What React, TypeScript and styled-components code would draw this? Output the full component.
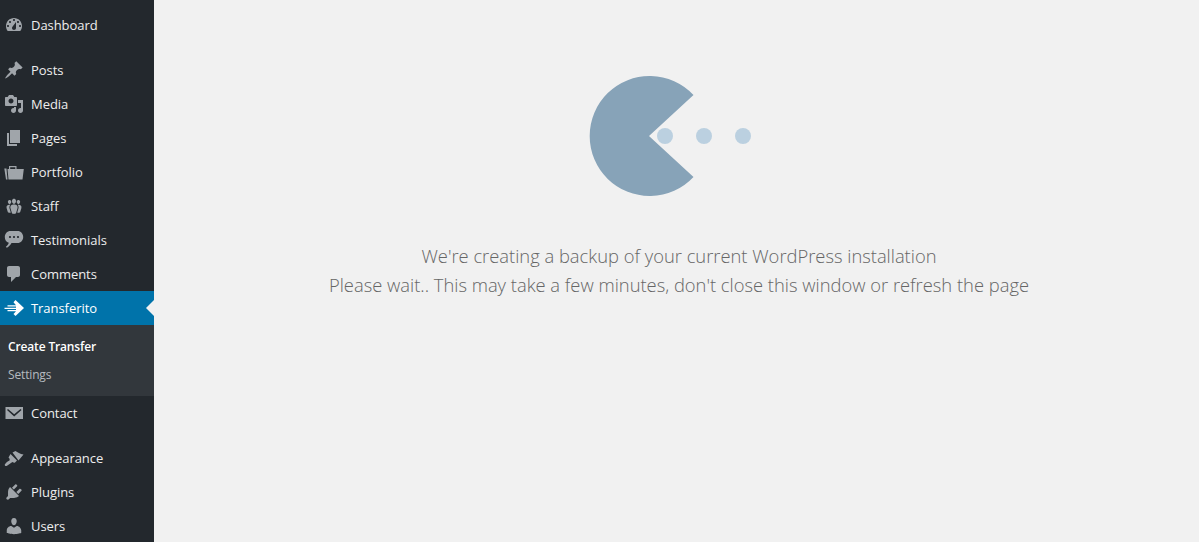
import React from "react"
import styled, { createGlobalStyle } from "styled-components"

const GlobalStyle = createGlobalStyle`
  html, body {
    margin: 0;
    height: 100%;
    background: #f1f1f1;
  }
  #root {
    height: 100%;
  }
`

const Page = styled.div`
  display: flex;
  width: 1199px;
  height: 542px;
  overflow: hidden;
`

const Sidebar = styled.nav`
  width: 154px;
  flex-shrink: 0;
  padding-top: 8px;
  background: #23282d;
  font-family: "Open Sans", "Liberation Sans", sans-serif;
`

const MenuItem = styled.div<{ $active?: boolean; $gap?: boolean }>`
  position: relative;
  display: flex;
  align-items: center;
  height: 34px;
  margin-bottom: ${({ $gap }) => ($gap ? "11px" : "0")};
  background: ${({ $active }) => ($active ? "#0073aa" : "transparent")};
  color: ${({ $active }) => ($active ? "#fff" : "#eee")};
  font-size: 13px;
  letter-spacing: -0.05px;

  ${({ $active }) =>
    $active &&
    `
    &::after {
      content: "";
      position: absolute;
      right: 0;
      top: 9px;
      border: 8px solid transparent;
      border-right-color: #f1f1f1;
    }
  `}
`

const IconSlot = styled.span`
  display: flex;
  justify-content: center;
  width: 31px;
  padding-right: 3px;
  box-sizing: border-box;
  color: #a0a5aa;
`

const ActiveIconSlot = styled(IconSlot)`
  color: #fff;
`

const SubMenu = styled.div`
  height: 71px;
  padding-top: 8px;
  box-sizing: border-box;
  background: #32373c;
`

const SubItem = styled.div<{ $current?: boolean }>`
  height: 28px;
  padding-left: 8px;
  line-height: 28px;
  color: ${({ $current }) => ($current ? "#fff" : "rgba(240, 245, 250, 0.7)")};
  font-size: 12px;
  font-weight: ${({ $current }) => ($current ? 600 : 400)};
  letter-spacing: -0.15px;
`

const Main = styled.main`
  flex: 1;
  display: flex;
  flex-direction: column;
  align-items: center;
  padding: 76px 0 0 5px;
  background: #f1f1f1;
`

const Loader = styled.svg`
  display: block;
  margin-right: 11px;
`

const Message = styled.p`
  margin: 45px 0 0;
  color: #666;
  font-family: "Open Sans", "Liberation Sans", sans-serif;
  font-size: 18.35px;
  font-weight: 300;
  line-height: 29px;
  text-align: center;
  white-space: nowrap;
`

const Icon: React.FC<{ d: string; size?: number }> = ({ d, size = 20 }) => (
  <svg width={size} height={size} viewBox="0 0 20 20" fill="currentColor">
    <path fillRule="evenodd" d={d} />
  </svg>
)

const paths = {
  dashboard:
    "M3.76 16h12.48c1.1-1.37 1.76-3.11 1.76-5 0-4.42-3.58-8-8-8s-8 3.58-8 8c0 1.89.66 3.63 1.76 5zM10 4c.55 0 1 .45 1 1s-.45 1-1 1-1-.45-1-1 .45-1 1-1zM6 6c.55 0 1 .45 1 1s-.45 1-1 1-1-.45-1-1 .45-1 1-1zm8 0c.55 0 1 .45 1 1s-.45 1-1 1-1-.45-1-1 .45-1 1-1zm-5.37 5.55L12 7v6c0 1.1-.9 2-2 2s-2-.9-2-2c0-.57.24-1.08.63-1.45zM4 10c.55 0 1 .45 1 1s-.45 1-1 1-1-.45-1-1 .45-1 1-1zm12 0c.55 0 1 .45 1 1s-.45 1-1 1-1-.45-1-1 .45-1 1-1z",
  posts:
    "M10.44 3.02l1.82-1.82 6.36 6.35-1.83 1.82c-1.05-.68-2.48-.57-3.41.36l-.75.75c-.92.93-1.04 2.35-.35 3.41l-1.83 1.82-2.41-2.41-2.8 2.79c-.42.42-3.38 2.71-3.8 2.29s1.86-3.39 2.28-3.81l2.79-2.79L4.1 9.36l1.83-1.82c1.05.69 2.48.57 3.4-.36l.75-.75c.93-.92 1.05-2.35.36-3.41z",
  media:
    "M13 11V4c0-.55-.45-1-1-1h-1.67L9 1H5L3.67 3H2c-.55 0-1 .45-1 1v7c0 .55.45 1 1 1h10c.55 0 1-.45 1-1zM7 4.5c1.38 0 2.5 1.12 2.5 2.5S8.38 9.5 7 9.5 4.5 8.38 4.5 7 5.62 4.5 7 4.5zM14 6h5v10.5c0 1.38-1.12 2.5-2.5 2.5S14 17.88 14 16.5s1.12-2.5 2.5-2.5c.17 0 .34.02.5.05V9h-3V6zm-4 8.05V13h2v3.5c0 1.38-1.12 2.5-2.5 2.5S7 17.88 7 16.5 8.12 14 9.5 14c.17 0 .34.02.5.05z",
  pages: "M6 15V2h10v13H6zm-1 1h8v2H3V5h2v11z",
  portfolio:
    "M3.500 7H5V4h7.500V7H19.800L18.500 17.500H4.500zM6.200 5.200h5.100V7H6.200zM.300 6.500H2.500L3.500 17.500H2z",
  staff:
    "M8.03 4.46c-.29 1.28.55 3.46 1.97 3.46 1.41 0 2.25-2.18 1.96-3.46-.22-.98-1.08-1.63-1.96-1.63-.89 0-1.74.65-1.97 1.63zm-4.13.9c-.25 1.08.47 2.93 1.67 2.93s1.92-1.85 1.67-2.93c-.19-.83-.92-1.39-1.67-1.39s-1.48.56-1.67 1.39zm8.86 0c-.25 1.08.47 2.93 1.66 2.93 1.2 0 1.92-1.85 1.67-2.93-.19-.83-.92-1.39-1.67-1.39-.74 0-1.47.56-1.66 1.39zm-.59 11.43l1.25-4.3C14.2 10 12.71 8.47 10 8.47c-2.72 0-4.21 1.53-3.44 4.02l1.26 4.3C8.05 17.51 9 18 10 18c.98 0 1.94-.49 2.17-1.21zm-6.1-7.63c-.49.67-.96 1.83-.42 3.59l1.12 3.79c-.34.2-.77.31-1.2.31-.85 0-1.65-.41-1.85-1.03l-1.07-3.65c-.65-2.11.61-3.4 2.92-3.4.27 0 .54.02.79.06-.1.1-.2.22-.29.33zm8.35-.39c2.31 0 3.58 1.29 2.92 3.4l-1.07 3.65c-.2.62-1 1.03-1.85 1.03-.43 0-.86-.11-1.2-.31l1.11-3.77c.55-1.78.08-2.94-.42-3.61-.08-.11-.18-.23-.28-.33.25-.04.51-.06.79-.06z",
  testimonials:
    "M6.500 1h7c3.400 0 5.700 2.700 5.700 6s-2.300 6-5.700 6H7.500C6.500 15 4.500 16.800 2.800 17.800L1.800 16.800C3.200 15.800 4.300 14.500 4.800 12.800 2.300 12 .800 9.800.800 7 .800 3.700 3.100 1 6.500 1zM6 5.900a1.100 1.100 0 1 0 0 2.200 1.100 1.100 0 0 0 0-2.200zm4 0a1.100 1.100 0 1 0 0 2.200 1.100 1.100 0 0 0 0-2.200zm4 0a1.100 1.100 0 1 0 0 2.200 1.100 1.100 0 0 0 0-2.200z",
  comments: "M5 2h9c1.1 0 2 .9 2 2v7c0 1.1-.9 2-2 2h-2l-5 5v-5H5c-1.1 0-2-.9-2-2V4c0-1.1.9-2 2-2z",
  transfer:
    "M11.500 2L20 10l-8.500 8-2-2 2.500-2.700H3.500v-1.200h8.500v-1.200H.500v-1.200H12V8.500H3.500V7.300h8.500L9.500 4.200z",
  contact:
    "M1.500 4H19V16H1.500zM4 6L10.200 11.300 16.500 6 17.500 7 10.200 13.500 3 7z",
  appearance:
    "M8.500 4.500L11.500 3C13.500 4 16 6 19.500 6.500L14.500 12.500zM6.500 6L13 12.500 11 14.500C10 15 9.500 14.500 8.500 14 7 14.500 5 16.800 3 17.800 1.500 18.500.500 17.500.800 16.500 1.500 15 3.500 13.500 5.500 12.500 6 11 5.500 10.500 4.500 9.500 4 8.500z",
  plugins:
    "M13.110 4.360L9.870 7.600 8 5.730l3.240-3.240c.35-.34 1.050-.2 1.560.32.52.51.66 1.210.31 1.550zm-8 1.770l.91-1.120 9.010 9.010-1.190.84c-.71.71-2.630 1.160-3.820 1.160H6.140L4.900 17.260c-.59.59-1.540.59-2.120 0-.59-.58-.59-1.530 0-2.120l1.240-1.240v-3.880c0-1.130.4-3.190 1.090-3.890zm7.260 3.970l3.240-3.240c.34-.35 1.040-.21 1.550.31.52.51.66 1.210.31 1.550l-3.240 3.250z",
  users:
    "M10 9.250c-2.270 0-2.730-3.440-2.730-3.440C7 4.020 7.820 2 9.970 2c2.160 0 2.980 2.020 2.710 3.810 0 0-.41 3.440-2.680 3.440zm0 2.570L12.720 10c2.390 0 4.520 2.330 4.520 4.530v2.490s-3.650 1.130-7.240 1.130c-3.650 0-7.240-1.130-7.240-1.130v-2.490c0-2.250 1.940-4.480 4.470-4.480z",
}

const topItems = [
  { label: "Dashboard", d: paths.dashboard, gap: true },
  { label: "Posts", d: paths.posts },
  { label: "Media", d: paths.media },
  { label: "Pages", d: paths.pages },
  { label: "Portfolio", d: paths.portfolio },
  { label: "Staff", d: paths.staff },
  { label: "Testimonials", d: paths.testimonials },
  { label: "Comments", d: paths.comments },
]

const bottomItems = [
  { label: "Contact", d: paths.contact, gap: true },
  { label: "Appearance", d: paths.appearance },
  { label: "Plugins", d: paths.plugins },
  { label: "Users", d: paths.users },
]

const App: React.FC = () => {
  return (
    <Page>
      <GlobalStyle />
      <Sidebar>
        {topItems.map((item) => (
          <MenuItem key={item.label} $gap={item.gap}>
            <IconSlot>
              <Icon d={item.d} />
            </IconSlot>
            {item.label}
          </MenuItem>
        ))}
        <MenuItem $active>
          <ActiveIconSlot>
            <Icon d={paths.transfer} />
          </ActiveIconSlot>
          Transferito
        </MenuItem>
        <SubMenu>
          <SubItem $current>Create Transfer</SubItem>
          <SubItem>Settings</SubItem>
        </SubMenu>
        {bottomItems.map((item) => (
          <MenuItem key={item.label} $gap={item.gap}>
            <IconSlot>
              <Icon d={item.d} />
            </IconSlot>
            {item.label}
          </MenuItem>
        ))}
      </Sidebar>
      <Main>
        <Loader width="170" height="120" viewBox="0 0 170 120">
          <path d="M60 60 L104.500 19 A60 60 0 1 0 104.500 101 Z" fill="#87a3b8" />
          <circle cx="76" cy="60" r="8" fill="#bbd0e0" />
          <circle cx="115" cy="60" r="8" fill="#bbd0e0" />
          <circle cx="154" cy="60" r="8" fill="#bbd0e0" />
        </Loader>
        <Message>
          We're creating a backup of your current WordPress installation
          <br />
          Please wait.. This may take a few minutes, don't close this window or refresh the page
        </Message>
      </Main>
    </Page>
  )
}

export default App
